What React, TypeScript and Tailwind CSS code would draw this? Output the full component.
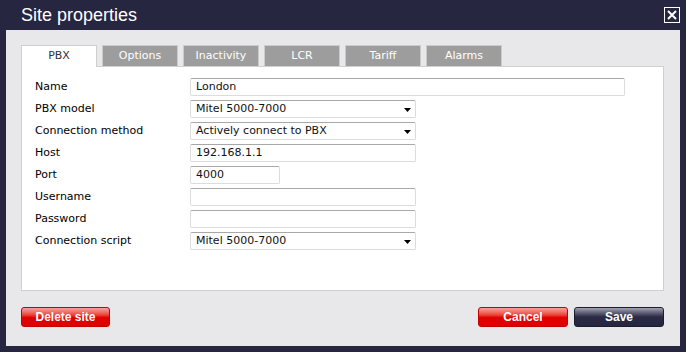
import React from "react";

const tabs = ["PBX", "Options", "Inactivity", "LCR", "Tariff", "Alarms"];

type Field = {
  label: string;
  value: string;
  width: string;
  select?: boolean;
};

const fields: Field[] = [
  { label: "Name", value: "London", width: "w-[435px]" },
  { label: "PBX model", value: "Mitel 5000-7000", width: "w-[226px]", select: true },
  { label: "Connection method", value: "Actively connect to PBX", width: "w-[226px]", select: true },
  { label: "Host", value: "192.168.1.1", width: "w-[226px]" },
  { label: "Port", value: "4000", width: "w-[90px]" },
  { label: "Username", value: "", width: "w-[226px]" },
  { label: "Password", value: "", width: "w-[226px]" },
  { label: "Connection script", value: "Mitel 5000-7000", width: "w-[226px]", select: true },
];

function CloseIcon() {
  return (
    <svg width="16" height="16" viewBox="0 0 16 16">
      <rect x="0.5" y="0.5" width="15" height="15" fill="none" stroke="#fff" strokeWidth="1" />
      <path d="M4 4 L12 12 M12 4 L4 12" stroke="#fff" strokeWidth="2" />
    </svg>
  );
}

function FieldRow({ field }: { field: Field }) {
  return (
    <div className="flex items-center h-[18px]">
      <div className="w-[155px] text-[11px] text-black">{field.label}</div>
      <div
        className={`${field.width} h-[18px] flex items-center justify-between bg-white border border-[#dcdcdc] border-t-[#a8a8a8] rounded-[2px] pl-[5px] pr-[4px] text-[11px] text-[#111]`}
      >
        <span>{field.value}</span>
        {field.select && (
          <svg width="7" height="4" viewBox="0 0 7 4" className="mt-[2px]">
            <path d="M0 0 H7 L3.5 4 Z" fill="#000" />
          </svg>
        )}
      </div>
    </div>
  );
}

function Button({ label, tone, width }: { label: string; tone: "red" | "navy"; width: string }) {
  const cls =
    tone === "red"
      ? "bg-gradient-to-b from-[#f4a0a0] via-[#e20000] via-50% to-[#e00000] border-[#c40000]"
      : "bg-gradient-to-b from-[#a3a3b0] via-[#2a2a45] via-50% to-[#262641] border-[#1c1c30]";
  return (
    <button
      className={`${width} h-[20px] rounded-[3px] border text-white font-bold text-[12px] leading-none ${cls}`}
      style={{ fontFamily: '"Liberation Sans", Arial, sans-serif' }}
    >
      {label}
    </button>
  );
}

export default function App() {
  return (
    <div
      className="w-[686px] h-[352px] bg-[#262641] flex flex-col"
      style={{ fontFamily: '"DejaVu Sans", Verdana, sans-serif' }}
    >
      <div className="h-[30px] flex items-center justify-between pl-[21px] pr-[6px]">
        <span
          className="text-white text-[18px] leading-none"
          style={{ fontFamily: '"Liberation Sans", Arial, sans-serif' }}
        >
          Site properties
        </span>
        <CloseIcon />
      </div>

      <div className="mx-[6px] h-[316px] bg-[#e8e8ea] pl-[15px] pr-[16px] pt-[15px] flex flex-col">
        <div className="flex gap-[5px] h-[21px]">
          {tabs.map((t, i) => (
            <div
              key={t}
              className={
                i === 0
                  ? "w-[76px] h-[22px] bg-white border border-b-0 border-[#cfcfcf] text-[#333] text-[11px] flex items-center justify-center relative z-10"
                  : "w-[76px] h-[21px] bg-[#9d9d9d] border border-b-0 border-[#cbcbcb] text-white text-[11px] flex items-center justify-center"
              }
            >
              {t}
            </div>
          ))}
        </div>

        <div className="h-[225px] bg-white border border-[#d0d0d0] pl-[13px] pt-[11px] flex flex-col gap-[4px]">
          {fields.map((f) => (
            <FieldRow key={f.label} field={f} />
          ))}
        </div>

        <div className="flex justify-between mt-[16px]">
          <Button label="Delete site" tone="red" width="w-[89px]" />
          <div className="flex gap-[6px]">
            <Button label="Cancel" tone="red" width="w-[90px]" />
            <Button label="Save" tone="navy" width="w-[90px]" />
          </div>
        </div>
      </div>
    </div>
  );
}
